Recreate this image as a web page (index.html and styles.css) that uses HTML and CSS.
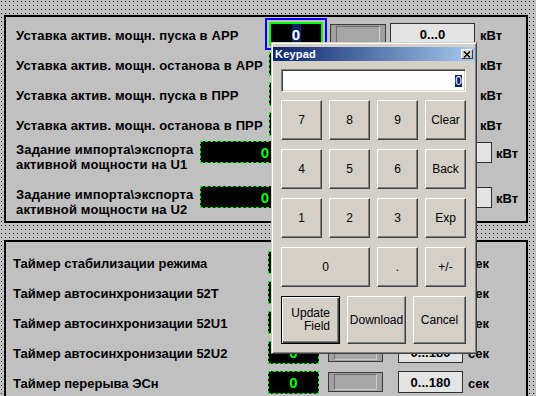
FILE: index.html
```html
<!DOCTYPE html>
<html lang="ru">
<head>
<meta charset="utf-8">
<title>Keypad</title>
<link rel="stylesheet" href="styles.css">
</head>
<body>
<section class="panel panel-top">
  <div class="row">
    <span class="label">Уставка актив. мощн. пуска в АРР</span>
    <div class="controls">
      <div class="display focused"><span class="sel">0</span></div>
      <div class="knob"><i></i></div>
      <div class="range">0...0</div>
      <span class="unit">кВт</span>
    </div>
  </div>
  <div class="row">
    <span class="label">Уставка актив. мощн. останова в АРР</span>
    <div class="controls">
      <div class="display">0</div>
      <div class="knob"><i></i></div>
      <div class="range">0...0</div>
      <span class="unit">кВт</span>
    </div>
  </div>
  <div class="row">
    <span class="label">Уставка актив. мощн. пуска в ПРР</span>
    <div class="controls">
      <div class="display">0</div>
      <div class="knob"><i></i></div>
      <div class="range">0...0</div>
      <span class="unit">кВт</span>
    </div>
  </div>
  <div class="row">
    <span class="label">Уставка актив. мощн. останова в ПРР</span>
    <div class="controls">
      <div class="display">0</div>
      <div class="knob"><i></i></div>
      <div class="range">0...0</div>
      <span class="unit">кВт</span>
    </div>
  </div>
  <div class="row row-tall">
    <span class="label">Задание импорта\экспорта<br>активной мощности на U1</span>
    <div class="controls">
      <div class="display">0</div>
      <div class="knob"><i></i></div>
      <div class="range">0...0</div>
      <span class="unit">кВт</span>
    </div>
  </div>
  <div class="row row-tall row-last">
    <span class="label">Задание импорта\экспорта<br>активной мощности на U2</span>
    <div class="controls">
      <div class="display">0</div>
      <div class="knob"><i></i></div>
      <div class="range">0...0</div>
      <span class="unit">кВт</span>
    </div>
  </div>
</section>

<section class="panel panel-bottom">
  <div class="row">
    <span class="label">Таймер стабилизации режима</span>
    <div class="controls">
      <div class="display">0</div>
      <div class="knob"><i></i></div>
      <div class="range">0...180</div>
      <span class="unit">сек</span>
    </div>
  </div>
  <div class="row">
    <span class="label">Таймер автосинхронизации 52T</span>
    <div class="controls">
      <div class="display">0</div>
      <div class="knob"><i></i></div>
      <div class="range">0...180</div>
      <span class="unit">сек</span>
    </div>
  </div>
  <div class="row">
    <span class="label">Таймер автосинхронизации 52U1</span>
    <div class="controls">
      <div class="display">0</div>
      <div class="knob"><i></i></div>
      <div class="range">0...180</div>
      <span class="unit">сек</span>
    </div>
  </div>
  <div class="row">
    <span class="label">Таймер автосинхронизации 52U2</span>
    <div class="controls">
      <div class="display">0</div>
      <div class="knob"><i></i></div>
      <div class="range">0...180</div>
      <span class="unit">сек</span>
    </div>
  </div>
  <div class="row">
    <span class="label">Таймер перерыва ЭСн</span>
    <div class="controls">
      <div class="display">0</div>
      <div class="knob"><i></i></div>
      <div class="range">0...180</div>
      <span class="unit">сек</span>
    </div>
  </div>
</section>

<div class="keypad">
  <div class="titlebar">
    <span class="title">Keypad</span>
    <span class="close"><svg width="8" height="7" viewBox="0 0 8 7"><path d="M1 0.5L7 6.5M7 0.5L1 6.5" stroke="#000" stroke-width="1.4" fill="none"/></svg></span>
  </div>
  <div class="kp-body">
    <div class="kp-input"><span class="sel">0</span></div>
    <div class="kp-grid">
      <div class="key">7</div>
      <div class="key">8</div>
      <div class="key">9</div>
      <div class="key">Clear</div>
      <div class="key">4</div>
      <div class="key">5</div>
      <div class="key">6</div>
      <div class="key">Back</div>
      <div class="key">1</div>
      <div class="key">2</div>
      <div class="key">3</div>
      <div class="key">Exp</div>
      <div class="key key-wide">0</div>
      <div class="key">.</div>
      <div class="key">+/-</div>
    </div>
    <div class="kp-actions">
      <div class="key key-default">Update<br>Field</div>
      <div class="key">Download</div>
      <div class="key">Cancel</div>
    </div>
  </div>
</div>
</body>
</html>
```

FILE: styles.css
```css
html, body {
  margin: 0;
  padding: 0;
}

body {
  width: 536px;
  height: 396px;
  overflow: hidden;
  position: relative;
  background-color: #c0c0c0;
  background-image: conic-gradient(from 270deg at 1px 1px, #000 90deg, transparent 0);
  background-size: 4px 4px;
  background-position: 1px 1px;
  font-family: "Liberation Sans", Arial, sans-serif;
  color: #000;
}

.panel {
  background: #c0c0c0;
  border: 2px solid #000;
  box-sizing: border-box;
}

.panel-top {
  margin: 15px 0 0 4px;
  width: 524px;
  padding: 2px 0 0 10px;
}

.panel-bottom {
  margin: 17px 0 0 4px;
  width: 524px;
  height: 158px;
  border-bottom: 0;
  padding: 5px 0 0 7px;
  overflow: hidden;
}

.row {
  display: flex;
  align-items: center;
  height: 30px;
}

.label {
  font-weight: bold;
  font-size: 13px;
  line-height: 15px;
  white-space: nowrap;
  padding-top: 2px;
}

.panel-top .label {
  letter-spacing: 0.15px;
}

.controls {
  display: flex;
  align-items: center;
}

/* panel 1 geometry */
.panel-top .label {
  flex: 0 0 253px;
}

.panel-top .display {
  width: 54px;
  height: 24px;
}

.panel-top .knob {
  margin-left: 7px;
  width: 56px;
  height: 21px;
}

.panel-top .range {
  margin-left: 4px;
  width: 85px;
  height: 22px;
}

.panel-top .unit {
  margin-left: 5px;
}

.row-tall {
  align-items: flex-start;
  height: 45px;
}

.row-tall .label {
  flex-basis: 184px;
  padding-top: 3px;
}

.row-tall .controls {
  margin-top: 2px;
}

.panel-top .row-tall .display {
  width: 130px;
  height: 22px;
}

.panel-top .row-tall .knob {
  margin-left: 8px;
}

.panel-top .row-tall .range {
  margin-left: 13px;
  height: 21px;
}

.panel-top .row-tall .unit {
  margin-left: 4px;
}

.row-last {
  height: 37px;
}

/* panel 2 geometry */
.panel-bottom .label {
  flex: 0 0 255px;
}

.panel-bottom .display {
  width: 51px;
  height: 23px;
}

.panel-bottom .knob {
  margin-left: 9px;
  width: 55px;
  height: 20px;
}

.panel-bottom .range {
  margin-left: 15px;
  width: 65px;
  height: 22px;
}

.panel-bottom .unit {
  margin-left: 5px;
}

/* widgets */
.display {
  box-sizing: border-box;
  background: #000;
  border: 1px dashed #00ff00;
  color: #00ff00;
  font-weight: bold;
  font-size: 15px;
  display: flex;
  align-items: center;
  justify-content: center;
}

.display.focused {
  border: 2px solid #00ff00;
  outline: 2px solid #0000ff;
  outline-offset: 2px;
  color: #fff;
  align-items: stretch;
}

.display .sel {
  background: #0a246a;
  color: #fff;
  width: 9px;
  display: flex;
  align-items: center;
  justify-content: center;
}

.knob {
  box-sizing: border-box;
  border: 1px solid #3a3a3a;
  background: #a0a0a0;
  padding: 1px 5px;
}

.knob i {
  display: block;
  height: 100%;
  box-sizing: border-box;
  border: 1px solid;
  border-color: #6a6a6a #cfcfcf #cfcfcf #6a6a6a;
  background: #a6a6a6;
}

.range {
  box-sizing: border-box;
  border: 1px solid #303030;
  background: #e4e4e4;
  font-weight: bold;
  font-size: 13px;
  display: flex;
  align-items: center;
  justify-content: center;
}

.unit {
  font-weight: bold;
  font-size: 13px;
  padding-top: 2px;
}

/* keypad dialog */
.keypad {
  position: absolute;
  left: 271px;
  top: 42px;
  width: 206px;
  height: 312px;
  box-sizing: border-box;
  background: #d4d0c8;
  border: 1px solid;
  border-color: #d4d0c8 #404040 #404040 #d4d0c8;
  box-shadow: inset 1px 1px 0 #fff, inset -1px -1px 0 #808080;
  padding: 4px 1px 1px 1px;
}

.titlebar {
  height: 14px;
  background: linear-gradient(to right, #0a246a, #a6caf0);
  display: flex;
  align-items: center;
  justify-content: space-between;
  padding: 0 2px 0 2px;
}

.title {
  color: #fff;
  font-weight: bold;
  font-size: 11px;
  letter-spacing: 0.2px;
}

.close {
  width: 12px;
  height: 10px;
  box-sizing: border-box;
  background: #d4d0c8;
  border: 1px solid;
  border-color: #fff #404040 #404040 #fff;
  display: flex;
  align-items: center;
  justify-content: center;
}

.close svg {
  display: block;
}

.kp-body {
  padding: 8px 9px 0 8px;
}

.kp-input {
  height: 23px;
  box-sizing: border-box;
  background: #fff;
  border: 1px solid;
  border-color: #808080 #fff #fff #808080;
  box-shadow: inset 1px 1px 0 #404040, inset -1px -1px 0 #d4d0c8;
  display: flex;
  align-items: center;
  justify-content: flex-end;
  padding-right: 3px;
}

.kp-input .sel {
  background: #0a246a;
  color: #fff;
  font-size: 12px;
  line-height: 12px;
}

.kp-grid {
  margin-top: 8px;
  display: grid;
  grid-template-columns: repeat(4, 41px);
  grid-auto-rows: 40px;
  column-gap: 7px;
  row-gap: 9px;
}

.key {
  box-sizing: border-box;
  background: #d4d0c8;
  border: 1px solid;
  border-color: #fff #404040 #404040 #fff;
  box-shadow: inset -1px -1px 0 #808080;
  font-size: 12px;
  display: flex;
  align-items: center;
  justify-content: center;
  text-align: center;
  line-height: 13px;
}

.key-wide {
  grid-column: span 2;
}

.kp-actions {
  margin-top: 9px;
  display: grid;
  grid-template-columns: 59px 59px 53px;
  grid-auto-rows: 48px;
  column-gap: 7px;
}

.key-default {
  border: 1px solid #000;
  box-shadow: inset 1px 1px 0 #fff, inset -1px -1px 0 #404040, inset -2px -2px 0 #808080;
  justify-content: flex-end;
  text-align: right;
  padding-right: 9px;
}
```
